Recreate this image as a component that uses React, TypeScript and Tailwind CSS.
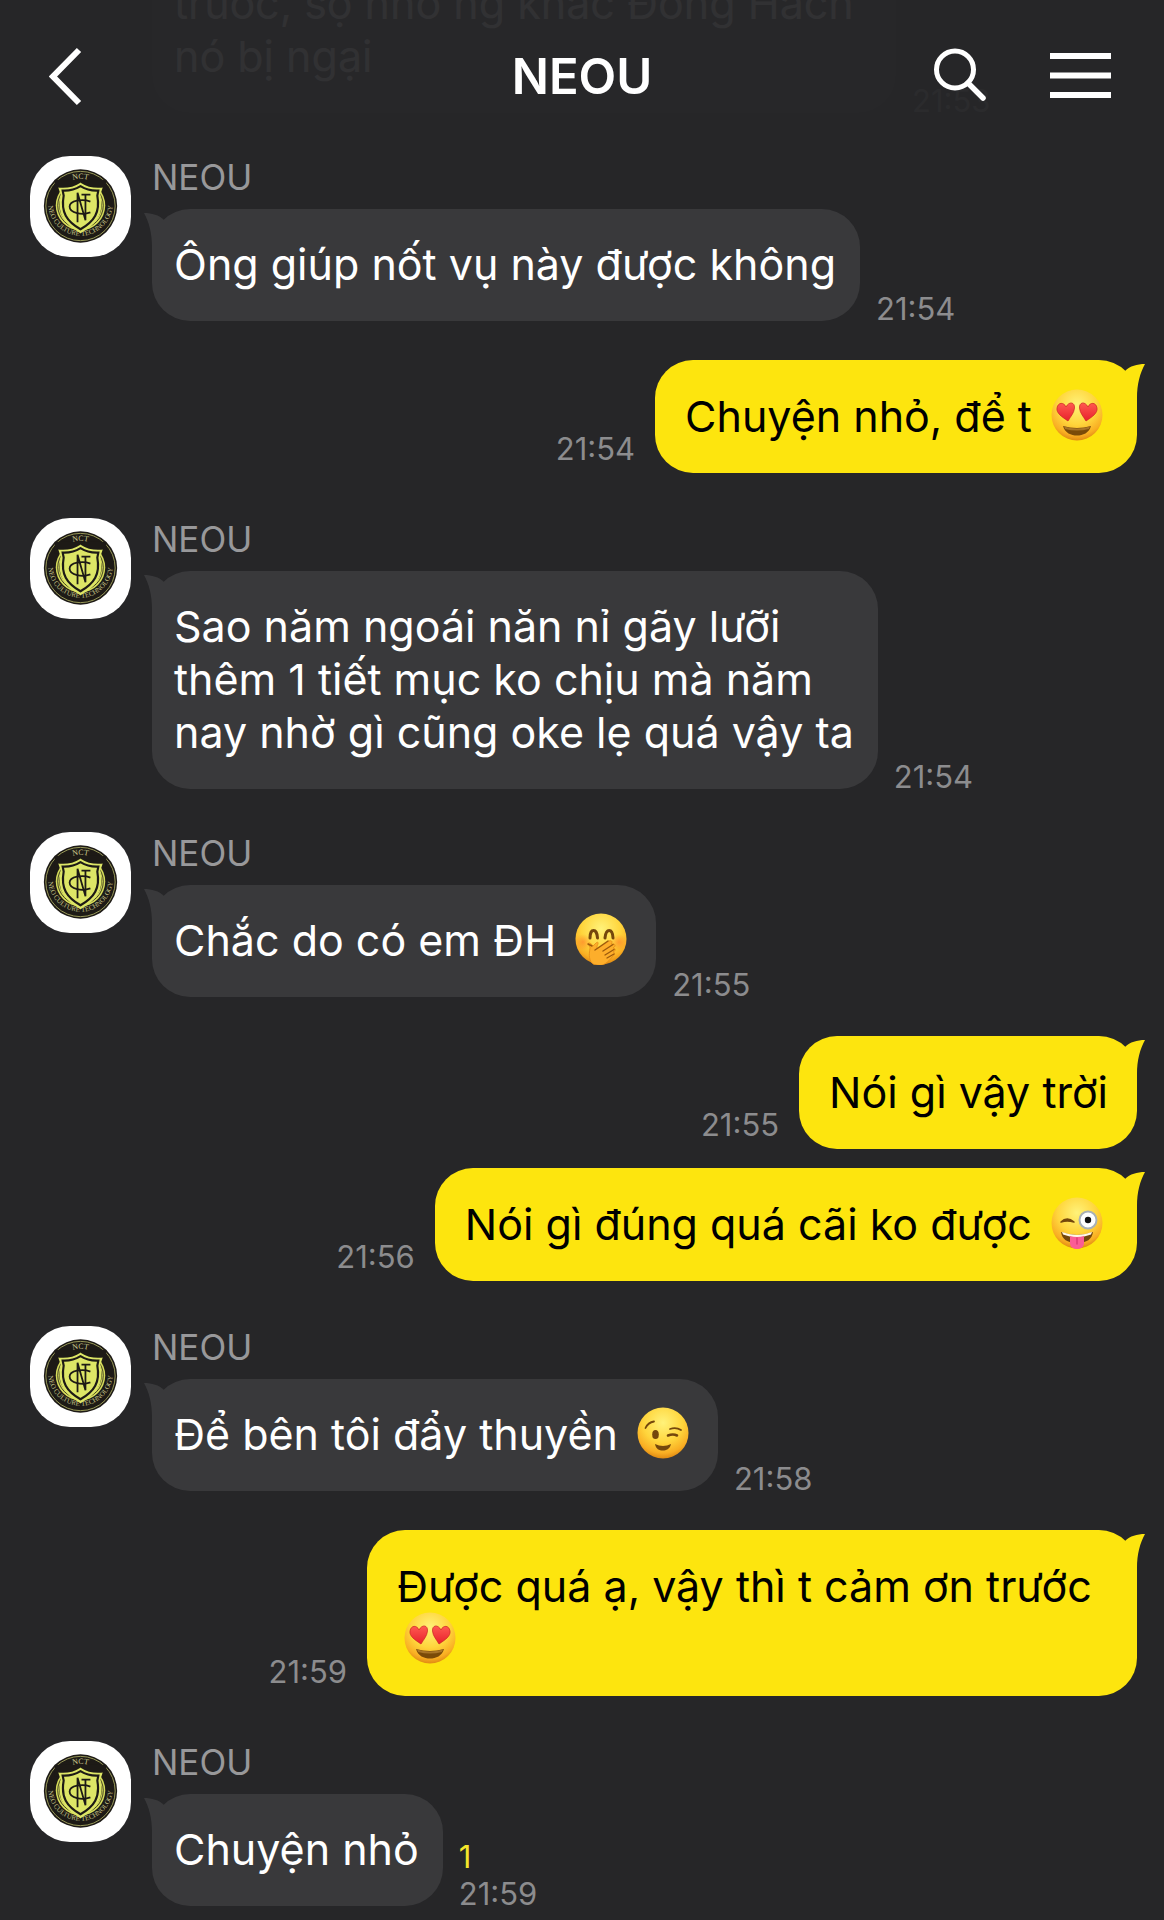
import React, { useId } from "react";

type EmojiName = "heartEyes" | "giggle" | "zany" | "wink";

type Message = {
  from: "me" | "them";
  text: string;
  time: string;
  emoji?: EmojiName;
  unread?: number;
};

const messages: Message[] = [
  { from: "them", text: "trước, sợ nhỏ ng khác Đồng Hách nó bị ngại", time: "21:53" },
  { from: "them", text: "Ông giúp nốt vụ này được không", time: "21:54" },
  { from: "me", text: "Chuyện nhỏ, để t", time: "21:54", emoji: "heartEyes" },
  {
    from: "them",
    text: "Sao năm ngoái năn nỉ gãy lưỡi\nthêm 1 tiết mục ko chịu mà năm\nnay nhờ gì cũng oke lẹ quá vậy ta",
    time: "21:54",
  },
  { from: "them", text: "Chắc do có em ĐH", time: "21:55", emoji: "giggle" },
  { from: "me", text: "Nói gì vậy trời", time: "21:55" },
  { from: "me", text: "Nói gì đúng quá cãi ko được", time: "21:56", emoji: "zany" },
  { from: "them", text: "Để bên tôi đẩy thuyền", time: "21:58", emoji: "wink" },
  { from: "me", text: "Được quá ạ, vậy thì t cảm ơn trước", time: "21:59", emoji: "heartEyes" },
  { from: "them", text: "Chuyện nhỏ", time: "21:59", unread: 1 },
];

// Space above a message depends on who wrote the one before it
const spacing = (index: number) => {
  if (index === 0) return "";
  const prev = messages[index - 1].from;
  const current = messages[index].from;
  if (current === "me") return prev === "me" ? "mt-[19px]" : "mt-[39px]";
  return prev === "me" ? "mt-[45px]" : "mt-[43px]";
};

const emojiLabels: Record<EmojiName, string> = {
  heartEyes: "😍",
  giggle: "🤭",
  zany: "😜",
  wink: "😉",
};

const Emoji: React.FC<{ name: EmojiName }> = ({ name }) => {
  const id = useId();
  return (
    <svg
      className="inline-block w-[52px] h-[52px] ml-[7px] mr-[5px] -mt-2.5 align-middle"
      viewBox="0 0 52 52"
      role="img"
      aria-label={emojiLabels[name]}
    >
      <defs>
        <radialGradient id={`${id}f`} cx="50%" cy="30%" r="70%">
          <stop offset="0" stopColor="#fff27a" />
          <stop offset="0.55" stopColor="#ffd53c" />
          <stop offset="0.85" stopColor="#f9ae23" />
          <stop offset="1" stopColor="#e08a12" />
        </radialGradient>
        <linearGradient id={`${id}h`} x1="0" y1="0" x2="0" y2="1">
          <stop offset="0" stopColor="#ff5a50" />
          <stop offset="1" stopColor="#e8202c" />
        </linearGradient>
        <radialGradient id={`${id}b`}>
          <stop offset="0" stopColor="#ff7a2a" stopOpacity="0.6" />
          <stop offset="1" stopColor="#ff7a2a" stopOpacity="0" />
        </radialGradient>
      </defs>
      <circle cx="26" cy="26" r="25.5" fill={`url(#${id}f)`} />
      {name === "heartEyes" && (
        <>
          <path
            d="M17 32 C11 28 5 24 6 19 C7 13 13 13 15 18 C18 12 24 13 23.500 19 C23 24 20 27 17 32Z"
            fill={`url(#${id}h)`}
            stroke="#c9251f"
            strokeWidth="0.7"
          />
          <path
            d="M35 32 C41 28 47 24 46 19 C45 13 39 13 37 18 C34 12 28 13 28.500 19 C29 24 32 27 35 32Z"
            fill={`url(#${id}h)`}
            stroke="#c9251f"
            strokeWidth="0.7"
          />
          <path d="M12 37 Q26 41 40 37 C38 44 32 46.500 26 46.500 C20 46.500 14 44 12 37Z" fill="#7a4a08" />
          <path d="M13 37.500 Q26 41.500 39 37.500 L38 40 Q26 43 14 40Z" fill="#a87427" />
        </>
      )}
      {name === "giggle" && (
        <>
          <circle cx="8" cy="29" r="8" fill={`url(#${id}b)`} />
          <circle cx="44" cy="29" r="8" fill={`url(#${id}b)`} />
          <path
            d="M15 25 C15 15 22 15 22.500 25 M30 25 C31 15 37.500 15 38 25"
            fill="none"
            stroke="#74470c"
            strokeWidth="3"
            strokeLinecap="round"
          />
          <path
            d="M16 49 C13 43 15 38 15 34 L13 31 C13 29 16 30 18 33 L21 30 C23 28 24 30 22 33 L22 36 L34 28 C37 27 38 29 36 31 L39 31 C41 32 40 34 38 35 C41 35 41 38 38 39 C40 39 40 42 38 43 C33 49 28 54 22 52 Q18 52 16 49Z"
            fill="#fdae2b"
            stroke="#e38b18"
            strokeWidth="0.8"
          />
          <path
            d="M13 31 L17 33 M20 37 L33 28 M28 38 L38 31.500 M30 42 L39 36.500 M32 45 L39 41"
            fill="none"
            stroke="#9c5a0c"
            strokeWidth="1.400"
            strokeLinecap="round"
          />
        </>
      )}
      {name === "zany" && (
        <>
          <path d="M10 25 Q16 19 23 25 Q16 23 10 25Z" fill="#74470c" stroke="#74470c" strokeWidth="1.600" strokeLinejoin="round" />
          <circle cx="37" cy="23" r="8.500" fill="#fff" stroke="#a9b0b5" strokeWidth="2" />
          <circle cx="37" cy="23" r="3.200" fill="#111" />
          <path d="M10 35 Q26 41 42 35 C41 42 36 46 26 46 C16 46 11 42 10 35Z" fill="#74470c" />
          <path d="M11 35 Q26 41 41 35 L40 37.500 Q26 43 12 37.500Z" fill="#fff8e8" />
          <path d="M19 39 Q26 41 33 39 L33 46 C33 54 19 54 19 46Z" fill="#fb5d95" />
          <path d="M26 41 V47" stroke="#d93772" strokeWidth="1.300" strokeLinecap="round" />
        </>
      )}
      {name === "wink" && (
        <>
          <g fill="none" stroke="#74470c" strokeLinecap="round">
            <path d="M8.500 21 Q11 15.500 17 14.500" strokeWidth="1.800" />
            <path d="M33 22 Q39 20 44 23" strokeWidth="1.800" />
            <path d="M31 28.500 Q36 26.500 40 28.500" strokeWidth="2.600" />
          </g>
          <ellipse cx="18.500" cy="27.500" rx="3.300" ry="4.600" fill="#74470c" />
          <path d="M18 37 Q26 41 34 37 C33 42 29 43.500 26 43.500 C22 43.500 19 42 18 37Z" fill="#74470c" />
        </>
      )}
    </svg>
  );
};

const Avatar: React.FC = () => {
  const id = useId();
  return (
    <div className="w-[101px] h-[101px] shrink-0 rounded-[40px] bg-white overflow-hidden">
      <svg viewBox="0 0 102 102" className="w-full h-full" aria-hidden="true">
        <circle cx="51" cy="50.500" r="37" fill="#1d1a16" />
        <circle cx="51" cy="50.500" r="35" fill="none" stroke="#b9bb6a" strokeWidth="0.800" />
        <path id={`${id}top`} d="M24 50 A27 27 0 0 1 78 50" fill="none" />
        <path id={`${id}low`} d="M18.500 48 A32.500 32.500 0 0 0 83.500 48" fill="none" />
        <circle cx="51" cy="50" r="25" fill="#d5dc5a" />
        <circle cx="51" cy="50" r="23" fill="none" stroke="#1d1a16" strokeWidth="0.800" />
        <circle cx="51" cy="50" r="21" fill="none" stroke="#1d1a16" strokeWidth="0.800" />
        <path d="M25 24 H77 V36 H25Z" fill="#1d1a16" />
        <text fontSize="8" fill="#c9c78a" fontFamily="Liberation Serif, serif" textAnchor="middle">
          <textPath href={`#${id}top`} startOffset="50%">NCT</textPath>
        </text>
        <text fontSize="7" fill="#c9c78a" fontFamily="Liberation Serif, serif" textAnchor="middle">
          <textPath href={`#${id}low`} startOffset="50%">NEO CULTURE TECHNOLOGY</textPath>
        </text>
        <path
          d="M30 33 Q42 34 51 28 Q60 34 72 33 L70 39 C74 58 67 68 51 77 C35 68 28 58 32 39Z"
          fill="#dde666"
          stroke="#dde666"
          strokeWidth="2"
        />
        <path
          d="M33 35 Q43 35.500 51 30.500 Q59 35.500 69 35 L68 40 C71 57 65 66 51 74 C37 66 31 57 34 40Z"
          fill="#dde666"
          stroke="#1d1a16"
          strokeWidth="2.200"
        />
        <g fill="none" stroke="#1d1a16" strokeWidth="1.800">
          <path d="M48 67 V37 L56 65 V39 M52 39 H61" />
          <path d="M61 46 C53 43 40 45 40 51 C40 58 53 60 61 57" />
        </g>
      </svg>
    </div>
  );
};

const Tail: React.FC<{ className: string }> = ({ className }) => (
  <svg className={`absolute top-1 w-5 h-[34px] ${className}`} viewBox="0 0 20 34" aria-hidden="true">
    <path d="M0 0 C8 0 15 2 20 7 V34 H8 C8 20 5 9 0 0Z" fill="currentColor" />
  </svg>
);

const TheirMessage: React.FC<{ message: Message }> = ({ message }) => (
  <div className="flex items-start gap-[21px]">
    <Avatar />
    <div className="min-w-0">
      <p className="text-[35px] leading-[42px] mb-[11px] text-[#98989a]">NEOU</p>
      <div className="flex items-end gap-4">
        <div className="relative max-w-[744px] rounded-[38px] bg-[#39393b] pt-[29px] pb-[30px] pl-[22px] pr-[24px] text-white">
          <Tail className="-left-2 text-[#39393b]" />
          <p className="text-[43px] leading-[53px] whitespace-pre-line">
            {message.text}
            {message.emoji && <> <Emoji name={message.emoji} /></>}
          </p>
        </div>
        <div className="flex flex-col gap-[13px] text-[31px] leading-[24px] text-[#8c8c8e]">
          {message.unread && <span className="text-[#f5e62b]">{message.unread}</span>}
          <time>{message.time}</time>
        </div>
      </div>
    </div>
  </div>
);

const MyMessage: React.FC<{ message: Message }> = ({ message }) => (
  <div className="flex items-end justify-end gap-5">
    <time className="mb-3 text-[31px] leading-[24px] text-[#8c8c8e]">{message.time}</time>
    <div className="relative max-w-[770px] rounded-[38px] bg-[#fde50e] py-[30px] pl-[30px] pr-[29px] text-black">
      <Tail className="-right-2 -scale-x-100 text-[#fde50e]" />
      <p className="text-[43px] leading-[53px] whitespace-pre-line">
        {message.text}
        {message.emoji && <> <Emoji name={message.emoji} /></>}
      </p>
    </div>
  </div>
);

const App: React.FC = () => {
  return (
    <div className="relative h-screen overflow-hidden bg-[#262628] font-['Inter','Liberation_Sans',sans-serif]">
      <header className="absolute inset-x-0 top-0 z-10 grid grid-cols-[1fr_auto_1fr] items-center h-[154px] px-[49px] bg-[#262628]/95 text-white">
        <button type="button" aria-label="Back" className="w-fit">
          <svg className="w-[40px] h-[60px]" viewBox="0 0 40 60" fill="none">
            <path d="M30 3 L4 29.500 L30 56" stroke="currentColor" strokeWidth="6" />
          </svg>
        </button>
        <h1 className="text-[49px] leading-[60px] font-semibold">NEOU</h1>
        <div className="flex items-center justify-end gap-[62px]">
          <button type="button" aria-label="Search">
            <svg className="w-[56px] h-[60px]" viewBox="0 0 56 60" fill="none" stroke="currentColor">
              <circle cx="23" cy="22.500" r="18.500" strokeWidth="5" />
              <path d="M36 36 L51 51" strokeWidth="5.500" strokeLinecap="round" />
            </svg>
          </button>
          <button type="button" aria-label="Menu">
            <svg className="w-[65px] h-[60px]" viewBox="0 0 65 60" fill="currentColor">
              <path d="M0 6 H61 V12 H0Z M0 25.500 H61 V31.500 H0Z M0 45 H61 V51 H0Z" />
            </svg>
          </button>
        </div>
      </header>
      <main className="flex flex-col justify-end h-full pl-[30px] pr-[27px] pb-[14px]">
        {messages.map((message, index) => (
          <div key={index} className={spacing(index)}>
            {message.from === "me" ? <MyMessage message={message} /> : <TheirMessage message={message} />}
          </div>
        ))}
      </main>
    </div>
  );
};

export default App;
